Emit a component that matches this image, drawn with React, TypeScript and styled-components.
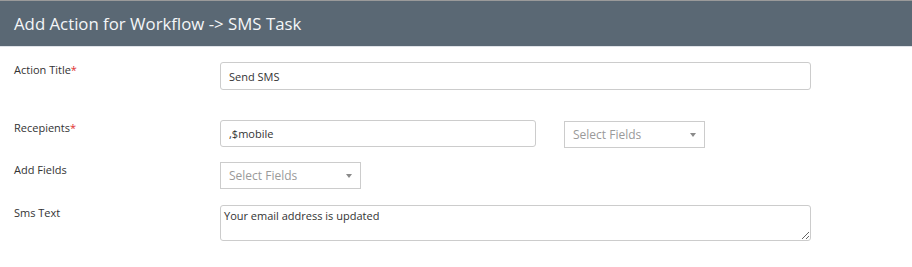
import React from 'react';
import styled, { createGlobalStyle } from 'styled-components';

const GlobalStyle = createGlobalStyle`
  html, body {
    margin: 0;
    padding: 0;
    background: #fff;
    font-family: "Open Sans", "Liberation Sans", sans-serif;
  }
`;

const Panel = styled.div`
  width: 912px;
  border-top: 1px solid #9a9a9a;
`;

const Header = styled.div`
  height: 45px;
  background: #5a6874;
  border-bottom: 1px solid #dfe3e8;
  display: flex;
  align-items: center;
  padding: 0 14px;
`;

const Title = styled.h2`
  margin: 0;
  font-size: 16.8px;
  font-weight: 400;
  color: #f4f6f8;
`;

const Form = styled.div`
  display: grid;
  grid-template-columns: 206px 1fr;
  padding: 15px 0 0 14px;
`;

const Label = styled.div<{ $gap: number }>`
  font-size: 11px;
  color: #333;
  margin-bottom: ${p => p.$gap}px;
`;

const Req = styled.span`
  color: #e03030;
`;

const Field = styled.div<{ $gap: number }>`
  display: flex;
  align-items: flex-start;
  gap: 28px;
  margin-bottom: ${p => p.$gap}px;
`;

const TextInput = styled.input<{ $w: number; $h: number }>`
  box-sizing: border-box;
  width: ${p => p.$w}px;
  height: ${p => p.$h}px;
  border: 1px solid #cccccc;
  border-radius: 3px;
  padding: 0 8px;
  font-family: inherit;
  font-size: 11px;
  color: #333;
  outline: none;
`;

const Select = styled.div`
  box-sizing: border-box;
  width: 141px;
  height: 27px;
  border: 1px solid #cccccc;
  display: flex;
  align-items: center;
  justify-content: space-between;
  padding: 0 8px 0 8px;
  font-size: 12px;
  color: #9a9a9a;
  background: #fff;
`;

const Caret = styled.span`
  width: 0;
  height: 0;
  border-left: 3px solid transparent;
  border-right: 3px solid transparent;
  border-top: 4px solid #8a8a8a;
  margin-top: 1px;
`;

const Offset = styled.div`
  padding-top: 1px;
`;

const TextArea = styled.textarea`
  box-sizing: border-box;
  width: 591px;
  height: 36px;
  border: 1px solid #cccccc;
  border-radius: 3px;
  padding: 2px 3px;
  font-family: inherit;
  font-size: 11px;
  color: #333;
  outline: none;
  resize: both;
  display: block;
`;

const SelectFields = () => (
  <Select>
    <span>Select Fields</span>
    <Caret />
  </Select>
);

export default function App() {
  return (
    <>
      <GlobalStyle />
      <Panel>
        <Header>
          <Title>Add Action for Workflow -&gt; SMS Task</Title>
        </Header>
        <Form>
          <Label $gap={30}>Action Title<Req>*</Req></Label>
          <Field $gap={30}>
            <TextInput $w={591} $h={28} defaultValue="Send SMS" />
          </Field>

          <Label $gap={14}>Recepients<Req>*</Req></Label>
          <Field $gap={14}>
            <TextInput $w={316} $h={27} defaultValue=",$mobile" />
            <Offset>
              <SelectFields />
            </Offset>
          </Field>

          <Label $gap={16}>Add Fields</Label>
          <Field $gap={16}>
            <SelectFields />
          </Field>

          <Label $gap={0}>Sms Text</Label>
          <Field $gap={0}>
            <TextArea defaultValue="Your email address is updated" />
          </Field>
        </Form>
      </Panel>
    </>
  );
}
